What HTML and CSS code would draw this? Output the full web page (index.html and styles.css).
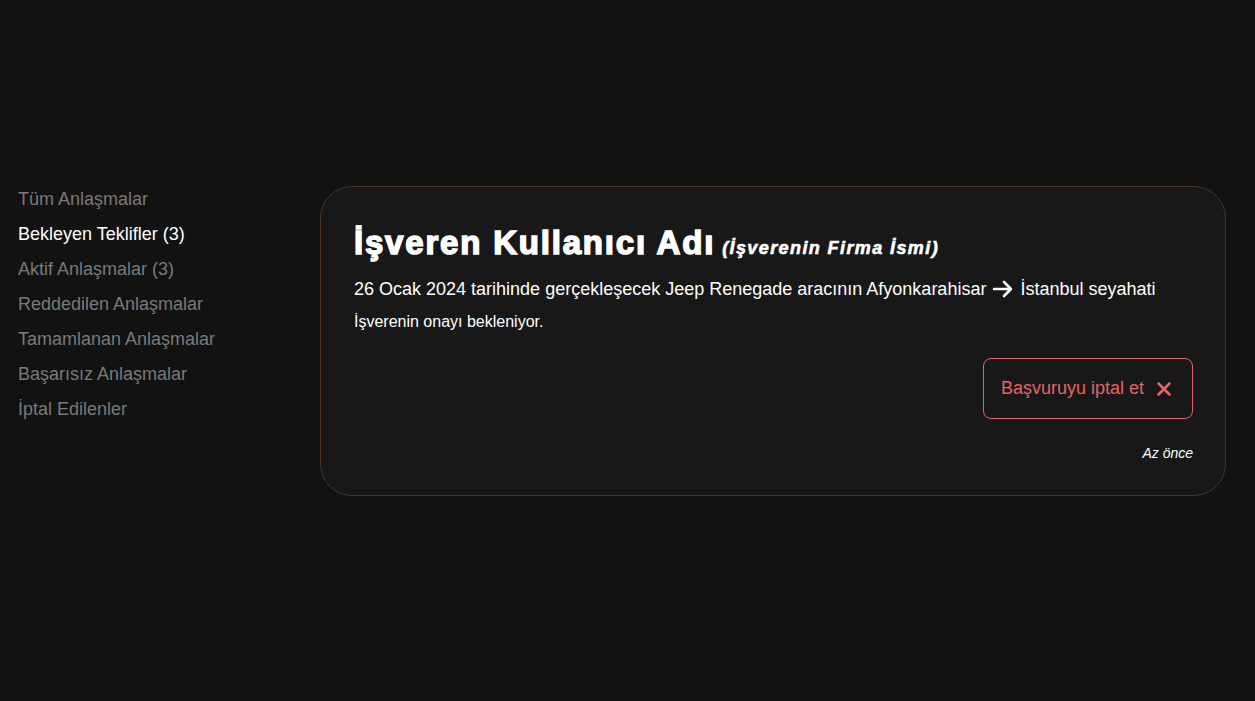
FILE: index.html
```html
<!DOCTYPE html>
<html lang="tr">
<head>
<meta charset="utf-8">
<title>Anlaşmalar</title>
<link rel="stylesheet" href="styles.css">
</head>
<body>
<div class="page">
  <nav class="sidebar">
    <a class="nav-item">Tüm Anlaşmalar</a>
    <a class="nav-item active">Bekleyen Teklifler (3)</a>
    <a class="nav-item">Aktif Anlaşmalar (3)</a>
    <a class="nav-item">Reddedilen Anlaşmalar</a>
    <a class="nav-item">Tamamlanan Anlaşmalar</a>
    <a class="nav-item">Başarısız Anlaşmalar</a>
    <a class="nav-item">İptal Edilenler</a>
  </nav>
  <main class="content">
    <section class="card">
      <h1 class="title">İşveren Kullanıcı Adı <span class="company">(İşverenin Firma İsmi)</span></h1>
      <p class="trip">26 Ocak 2024 tarihinde gerçekleşecek Jeep Renegade aracının Afyonkarahisar <svg class="arrow" viewBox="0 0 24 24" width="24" height="24"><path d="M3 12h17M13 5l7 7-7 7" fill="none" stroke="#fff" stroke-width="2.6" stroke-linecap="round" stroke-linejoin="round"/></svg> İstanbul seyahati</p>
      <p class="status">İşverenin onayı bekleniyor.</p>
      <div class="actions">
        <button class="cancel-btn">Başvuruyu iptal et <svg class="x-icon" viewBox="0 0 16 16" width="16" height="16"><path d="M2.5 2.5l11 11M13.5 2.5l-11 11" fill="none" stroke="#e46565" stroke-width="2.6" stroke-linecap="round"/></svg></button>
      </div>
      <div class="time">Az önce</div>
    </section>
  </main>
</div>
</body>
</html>
```
FILE: styles.css
```css
html, body {
  margin: 0;
  padding: 0;
  background: #121212;
  height: 100%;
}
body {
  font-family: "Liberation Sans", Arial, sans-serif;
  color: #fff;
}
.page {
  display: flex;
  padding-top: 186px;
  padding-left: 18px;
  padding-right: 29px;
}
.sidebar {
  display: flex;
  flex-direction: column;
  width: 302px;
  margin-top: -4px;
}
.nav-item {
  font-size: 18px;
  line-height: 35px;
  color: #7a7a7a;
  cursor: pointer;
}
.nav-item.active {
  color: #fff;
}
.content {
  flex: 1;
}
.card {
  background: #181818;
  border: 1px solid #4a3322;
  border-radius: 32px;
  padding: 36px 32px 34px 33px;
  height: 310px;
  box-sizing: border-box;
}
.title {
  margin: 0;
  font-size: 33px;
  font-weight: 900;
  line-height: 40px;
  letter-spacing: 1.8px;
  -webkit-text-stroke: 1.5px #fff;
}
.company {
  margin-left: -4px;
  font-size: 18px;
  font-style: italic;
  font-weight: 900;
  -webkit-text-stroke: 0.6px #fff;
  letter-spacing: 1.4px;
}
.trip {
  margin: 9px 0 0;
  font-size: 18px;
  line-height: 24px;
  display: flex;
  align-items: center;
  gap: 5px;
}
.arrow {
  display: block;
}
.status {
  margin: 11px 0 0;
  font-size: 16px;
  line-height: 20px;
}
.actions {
  display: flex;
  justify-content: flex-end;
  margin-top: 26px;
}
.cancel-btn {
  display: flex;
  align-items: center;
  gap: 12px;
  height: 61px;
  padding: 0 20px 0 17px;
  background: transparent;
  border: 1px solid #e06464;
  border-radius: 8px;
  color: #e46565;
  font-family: "Liberation Sans", Arial, sans-serif;
  font-size: 18px;
  cursor: pointer;
}
.time {
  text-align: right;
  margin-top: 25px;
  font-size: 14px;
  font-style: italic;
  line-height: 18px;
}
```
